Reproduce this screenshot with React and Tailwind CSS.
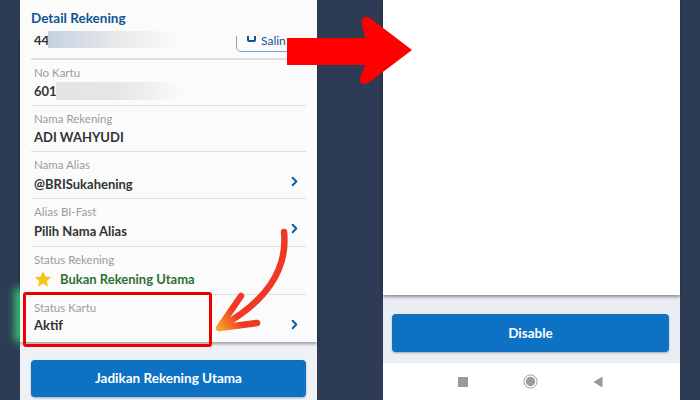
import { ChevronRight } from "lucide-react";

const font = { fontFamily: "Lato, 'Noto Sans', sans-serif" };

function Row({ label, children, chevron, height = "h-[46px]", gap = "mt-[2px]", last }) {
  return (
    <div className={`relative ${height} mx-[11px] ${last ? "" : "border-b border-[#dcdfe2]"}`}>
      <div className="px-[3px] pt-[6px] text-[11.5px] leading-[14px] text-[#9b9b9b]">{label}</div>
      <div className={`px-[3px] ${gap} flex items-center text-[13px] leading-[18px] font-bold text-[#333333]`}>
        {children}
      </div>
      {chevron && (
        <ChevronRight className="absolute right-[4px] top-[22px] text-[#0d5c9e]" size={15} strokeWidth={3} />
      )}
    </div>
  );
}

export default function App() {
  return (
    <div style={font} className="relative w-[700px] h-[400px] overflow-hidden bg-[#2d3b55] flex px-5 gap-[66px]">
      {/* green glow behind the left phone */}
      <div className="absolute left-[15px] top-[288px] w-[20px] h-[54px] bg-[#3ad077] blur-[4px]" />
      <div className="absolute left-[30px] top-[341px] w-[190px] h-[6px] bg-[#35c46b] blur-[4px]" />

      {/* Left phone */}
      <div className="relative w-[297px] h-full flex flex-col bg-[#eef1f5]">
        <div className="h-[36px] bg-[#fbfbfb] px-[11px] pt-[10px] text-[13.5px] leading-[17px] font-bold text-[#0d5596]">
          Detail Rekening
        </div>
        <div className="h-[306px] overflow-hidden bg-[#fbfbfb] shadow-[0_2px_3px_rgba(0,0,0,0.35)] relative">
          {/* first row, scrolled under the header */}
          <div className="relative h-[24px] mx-[11px] border-b-2 border-[#dcdfe2] overflow-hidden">
            <div className="absolute left-[3px] -top-[5px] text-[13px] leading-[18px] font-bold text-[#333333]">44</div>
            <div className="absolute left-[205px] -top-[10px] w-[75px] h-[26px] rounded-[5px] border border-[#7fa6c4] flex items-start pl-[10px] pt-[7px] gap-[5px] text-[12px] leading-[14px] text-[#0d5596]">
              <div className="w-[9px] h-[12px] -mt-[4px] rounded-[2px] border-2 border-[#0d5596]" />
              Salin
            </div>
          </div>
          <Row label="No Kartu">
            601
            <div className="h-[18px] -ml-[1px] w-[127px] bg-gradient-to-r from-[#e4e4e4] via-[#e6e6e6] to-[#fbfbfb]" />
          </Row>
          <Row label="Nama Rekening">ADI WAHYUDI</Row>
          <Row label="Nama Alias" height="h-[47px]" gap="mt-[3px]" chevron>@BRISukahening</Row>
          <Row label="Alias BI-Fast" height="h-[48px]" gap="mt-[3px]" chevron>Pilih Nama Alias</Row>
          <Row label="Status Rekening" height="h-[48px]" gap="mt-[3px]">
            <svg width="18" height="18" viewBox="0 0 24 24" className="mr-2">
              <path d="M12 1.5l3.2 7.2 7.8.8-5.9 5.2 1.7 7.7L12 18.4l-6.8 4 1.7-7.7L1 9.5l7.8-.8z" fill="#f5c518" />
            </svg>
            <span className="text-[#2e7033]">Bukan Rekening Utama</span>
          </Row>
          <Row label="Status Kartu" height="h-[48px]" gap="mt-[1px]" chevron last>Aktif</Row>
        </div>
        <div className="flex-1 px-[11px] pt-[18px]">
          <div className="h-[37px] rounded-[4px] bg-[#0e72c4] shadow-[0_1px_2px_rgba(0,0,0,0.3)] flex items-center justify-center text-[13.5px] font-bold text-white">
            Jadikan Rekening Utama
          </div>
        </div>
        {/* smudge over the account number */}
        <div className="absolute left-[28px] top-[31px] w-[127px] h-[17px] bg-gradient-to-r from-[#c3d2e0] via-[#e6e7e8] to-[#fbfbfb]" />
      </div>

      {/* Right phone */}
      <div className="w-[297px] h-full flex flex-col bg-white">
        <div className="h-[295px] bg-white shadow-[0_2px_3px_rgba(0,0,0,0.4)] relative" />
        <div className="h-[68px] bg-[#eaeef3] pl-[9px] pr-[11px] pt-[19px]">
          <div className="h-[38px] rounded-[4px] bg-[#0e72c4] shadow-[0_1px_2px_rgba(0,0,0,0.3)] flex items-center justify-center text-[13.5px] font-bold text-white">
            Disable
          </div>
        </div>
        <div className="flex-1 flex items-center pl-[75px] gap-[55px]">
          <div className="w-[10px] h-[10px] bg-[#9a9a9a]" />
          <svg width="15" height="15" viewBox="0 0 16 16">
            <circle cx="8" cy="8" r="7" fill="none" stroke="#9a9a9a" strokeWidth="1" />
            <circle cx="8" cy="8" r="5" fill="#9a9a9a" />
          </svg>
          <svg width="10" height="12" viewBox="0 0 10 12">
            <path d="M0.5 6L9.5 0.5V11.5z" fill="#9a9a9a" />
          </svg>
        </div>
      </div>

      {/* Red callout box */}
      <div className="absolute left-[23px] top-[292px] w-[189px] h-[55px] rounded-[3px] border-[3px] border-[#ee0000]" />

      {/* Curved orange arrow */}
      <svg className="absolute left-[210px] top-[225px]" width="90" height="110" viewBox="0 0 90 110" fill="none">
        <defs>
          <linearGradient id="tip" x1="8" y1="102" x2="26" y2="90" gradientUnits="userSpaceOnUse">
            <stop offset="0" stopColor="#f5a623" />
            <stop offset="1" stopColor="#ee3a24" />
          </linearGradient>
        </defs>
        <path d="M74 7C78 45 55 78 10 102" stroke="url(#tip)" strokeWidth="6.5" strokeLinecap="round" />
        <path d="M31 71L9 103L47 98" stroke="url(#tip)" strokeWidth="6.5" strokeLinecap="round" strokeLinejoin="round" />
      </svg>

      {/* Big red arrow across the phones */}
      <svg className="absolute left-[287px] top-[15px]" width="128" height="72" viewBox="0 0 128 72">
        <path d="M0 23H78L75 10C73 3 78 0 83 3L125 35L84 66C78 71 72 69 73 63L78 50H0z" fill="#fe0000" />
      </svg>
    </div>
  );
}
